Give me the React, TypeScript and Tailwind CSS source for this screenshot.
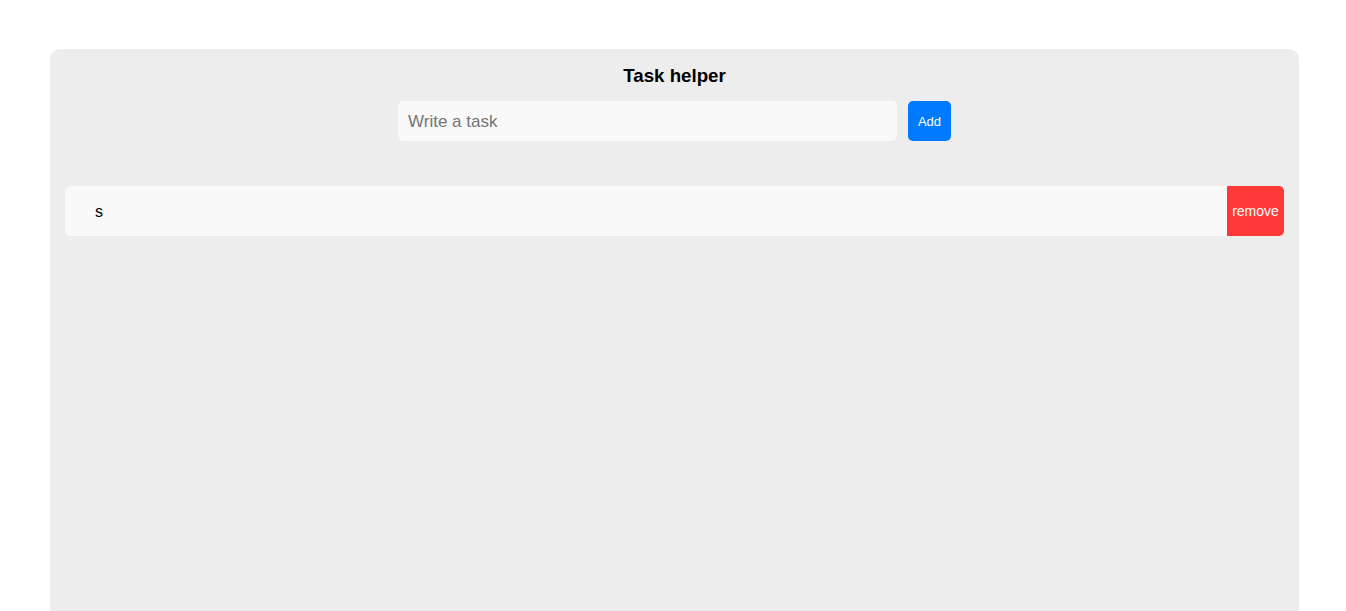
export default function App() {
  return (
    <div className="h-[611px] overflow-hidden bg-white pt-[49px] font-['Liberation_Sans',Arial,sans-serif]">
      <div className="ml-[50px] w-[1249px] h-[562px] rounded-t-[10px] bg-[#ededed] pt-[15px] px-[15px]">
        <h1 className="text-center text-[18.72px] font-bold leading-[24px] text-black">Task helper</h1>
        <div className="mt-[13px] flex justify-center gap-[11px]">
          <input
            placeholder="Write a task"
            className="h-[40px] w-[499px] rounded-[5px] bg-[#f9f9f9] px-[10px] pt-[1px] text-[17px] text-black placeholder:text-[#757575] outline-none"
          />
          <button className="h-[40px] w-[43px] rounded-[5px] bg-[#007bff] pt-[1px] text-[13px] text-white">Add</button>
        </div>
        <div className="mt-[45px] flex h-[50px] items-center rounded-[5px] bg-[#f9f9f9]">
          <span className="flex-1 pl-[30px] pt-[1px] text-[16px] text-black">s</span>
          <button className="h-full w-[57px] rounded-r-[5px] bg-[#ff3838] text-[14px] text-white">remove</button>
        </div>
      </div>
    </div>
  );
}
